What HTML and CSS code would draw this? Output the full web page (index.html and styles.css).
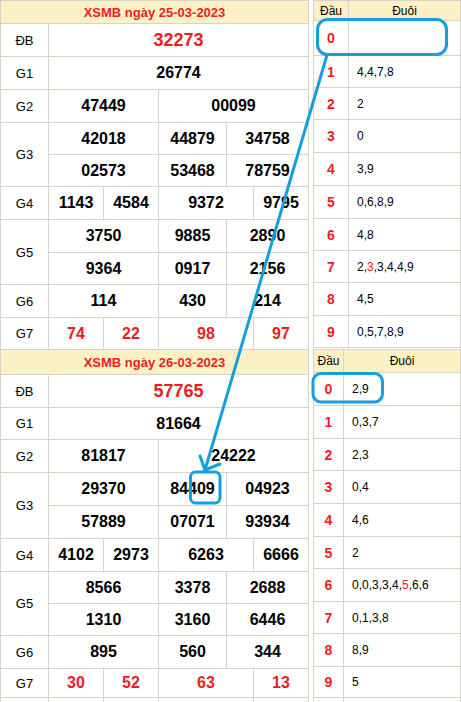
FILE: index.html
```html
<!DOCTYPE html>
<html lang="vi">
<head>
<meta charset="utf-8">
<title>XSMB</title>
<link rel="stylesheet" href="styles.css">
</head>
<body>
<div class="page">
  <section class="day day1">
    <div class="res">
      <div class="hd">XSMB ngày 25-03-2023</div>
      <div class="lb">ĐB</div><div class="n db s5">32273</div>
      <div class="lb">G1</div><div class="n s5">26774</div>
      <div class="lb">G2</div><div class="n h1">47449</div><div class="n h2">00099</div>
      <div class="lb r2">G3</div><div class="n t1">42018</div><div class="n t2">44879</div><div class="n t3">34758</div>
      <div class="n t1">02573</div><div class="n t2">53468</div><div class="n t3">78759</div>
      <div class="lb">G4</div><div class="n q1">1143</div><div class="n q2">4584</div><div class="n q3">9372</div><div class="n q4">9795</div>
      <div class="lb r2">G5</div><div class="n t1">3750</div><div class="n t2">9885</div><div class="n t3">2890</div>
      <div class="n t1">9364</div><div class="n t2">0917</div><div class="n t3">2156</div>
      <div class="lb">G6</div><div class="n t1">114</div><div class="n t2">430</div><div class="n t3">214</div>
      <div class="lb">G7</div><div class="n red q1">74</div><div class="n red q2">22</div><div class="n red q3">98</div><div class="n red q4">97</div>
    </div>
    <div class="lt">
      <div class="th">Đầu</div><div class="th">Đuôi</div>
      <div class="dd">0</div><div class="tl"></div>
      <div class="dd">1</div><div class="tl">4,4,7,8</div>
      <div class="dd">2</div><div class="tl">2</div>
      <div class="dd">3</div><div class="tl">0</div>
      <div class="dd">4</div><div class="tl">3,9</div>
      <div class="dd">5</div><div class="tl">0,6,8,9</div>
      <div class="dd">6</div><div class="tl">4,8</div>
      <div class="dd">7</div><div class="tl">2,<span class="hl">3</span>,3,4,4,9</div>
      <div class="dd">8</div><div class="tl">4,5</div>
      <div class="dd">9</div><div class="tl">0,5,7,8,9</div>
    </div>
  </section>
  <section class="day day2">
    <div class="res">
      <div class="hd">XSMB ngày 26-03-2023</div>
      <div class="lb">ĐB</div><div class="n db s5">57765</div>
      <div class="lb">G1</div><div class="n s5">81664</div>
      <div class="lb">G2</div><div class="n h1">81817</div><div class="n h2">24222</div>
      <div class="lb r2">G3</div><div class="n t1">29370</div><div class="n t2">84409</div><div class="n t3">04923</div>
      <div class="n t1">57889</div><div class="n t2">07071</div><div class="n t3">93934</div>
      <div class="lb">G4</div><div class="n q1">4102</div><div class="n q2">2973</div><div class="n q3">6263</div><div class="n q4">6666</div>
      <div class="lb r2">G5</div><div class="n t1">8566</div><div class="n t2">3378</div><div class="n t3">2688</div>
      <div class="n t1">1310</div><div class="n t2">3160</div><div class="n t3">6446</div>
      <div class="lb">G6</div><div class="n t1">895</div><div class="n t2">560</div><div class="n t3">344</div>
      <div class="lb">G7</div><div class="n red q1">30</div><div class="n red q2">52</div><div class="n red q3">63</div><div class="n red q4">13</div>
      <div class="lb"></div><div class="q1"></div><div class="q2"></div><div class="q3"></div><div class="q4"></div>
    </div>
    <div class="lt">
      <div class="th">Đầu</div><div class="th">Đuôi</div>
      <div class="dd">0</div><div class="tl">2,9</div>
      <div class="dd">1</div><div class="tl">0,3,7</div>
      <div class="dd">2</div><div class="tl">2,3</div>
      <div class="dd">3</div><div class="tl">0,4</div>
      <div class="dd">4</div><div class="tl">4,6</div>
      <div class="dd">5</div><div class="tl">2</div>
      <div class="dd">6</div><div class="tl">0,0,3,3,4,<span class="hl">5</span>,6,6</div>
      <div class="dd">7</div><div class="tl">0,1,3,8</div>
      <div class="dd">8</div><div class="tl">8,9</div>
      <div class="dd">9</div><div class="tl">5</div>
      <div class="dd"></div><div class="tl"></div>
    </div>
  </section>
  <svg class="ann" width="461" height="702" viewBox="0 0 461 702" aria-hidden="true">
    <g fill="none" stroke="#169fdc" stroke-width="3" stroke-linejoin="round" stroke-linecap="round">
      <rect x="317.5" y="19.5" width="129" height="35" rx="10"/>
      <line x1="327" y1="55" x2="205" y2="470"/>
      <polyline points="200,456 205,470 220,464"/>
      <rect x="190.5" y="472" width="29.5" height="31" rx="5"/>
      <rect x="313" y="373.5" width="69.5" height="28.5" rx="8"/>
    </g>
  </svg>
</div>
</body>
</html>
```
FILE: styles.css
```css
html, body {
  margin: 0;
  padding: 0;
  background: #ffffff;
}
body {
  font-family: "Liberation Sans", Arial, sans-serif;
  color: #000;
  width: 461px;
  height: 702px;
  overflow: hidden;
}
.page {
  position: relative;
  width: 461px;
  height: 702px;
  overflow: hidden;
}
.day {
  display: flex;
  align-items: flex-start;
  gap: 4px;
}
.res {
  display: grid;
  grid-template-columns: 47px 54px 54px 67px 26px 54px;
  gap: 1px;
  padding: 1px 1px 0 1px;
  background: #d8d2ca;
  width: 309px;
  box-sizing: border-box;
}
.day1 .res {
  grid-template-rows: 22px 32px 32px 32px 31px 31px 32px 32px 31px 32px 31px;
}
.day2 .res {
  grid-template-rows: 24px 32px 31px 32px 32px 32px 32px 31px 31px 32px 28px 10px;
}
.res > div {
  background: #fff;
  display: flex;
  align-items: center;
  justify-content: center;
}
.res > .hd {
  grid-column: 1 / -1;
  background: #fcf1c4;
  color: #ed1c24;
  font-weight: bold;
  font-size: 13px;
}
.lb {
  grid-column: 1;
  font-size: 13px;
}
.r2 { grid-row: span 2; }
.n {
  font-weight: bold;
  font-size: 16px;
}
.db {
  font-size: 18px;
  color: #ed1c24;
}
.red { color: #ed1c24; }
.s5 { grid-column: 2 / 7; }
.h1 { grid-column: 2 / 4; }
.h2 { grid-column: 4 / 7; }
.t1 { grid-column: 2 / 4; }
.t2 { grid-column: 4 / 5; }
.t3 { grid-column: 5 / 7; }
.q1 { grid-column: 2 / 3; }
.q2 { grid-column: 3 / 4; }
.q3 { grid-column: 4 / 6; }
.q4 { grid-column: 6 / 7; }

.lt {
  display: grid;
  gap: 1px;
  padding: 1px;
  background: #d8d2ca;
  width: 148px;
  box-sizing: border-box;
}
.day1 .lt {
  grid-template-columns: 34px 111px;
  grid-template-rows: 19px 34px 31px 31px 32px 32px 32px 31px 31px 32px 31px;
}
.day2 .lt {
  grid-template-columns: 29px 116px;
  grid-template-rows: 22px 32px 32px 31px 32px 32px 31px 32px 31px 32px 30px 10px;
  padding-bottom: 0;
}
.lt > div {
  background: #fff;
  display: flex;
  align-items: center;
}
.lt > .th {
  background: #fcf1c4;
  justify-content: center;
  font-size: 12px;
}
.dd {
  justify-content: center;
  color: #ed1c24;
  font-weight: bold;
  font-size: 14px;
}
.tl {
  padding-left: 8px;
  font-size: 12px;
}
.hl { color: #ed1c24; }
.ann {
  position: absolute;
  left: 0;
  top: 0;
  pointer-events: none;
}
```
